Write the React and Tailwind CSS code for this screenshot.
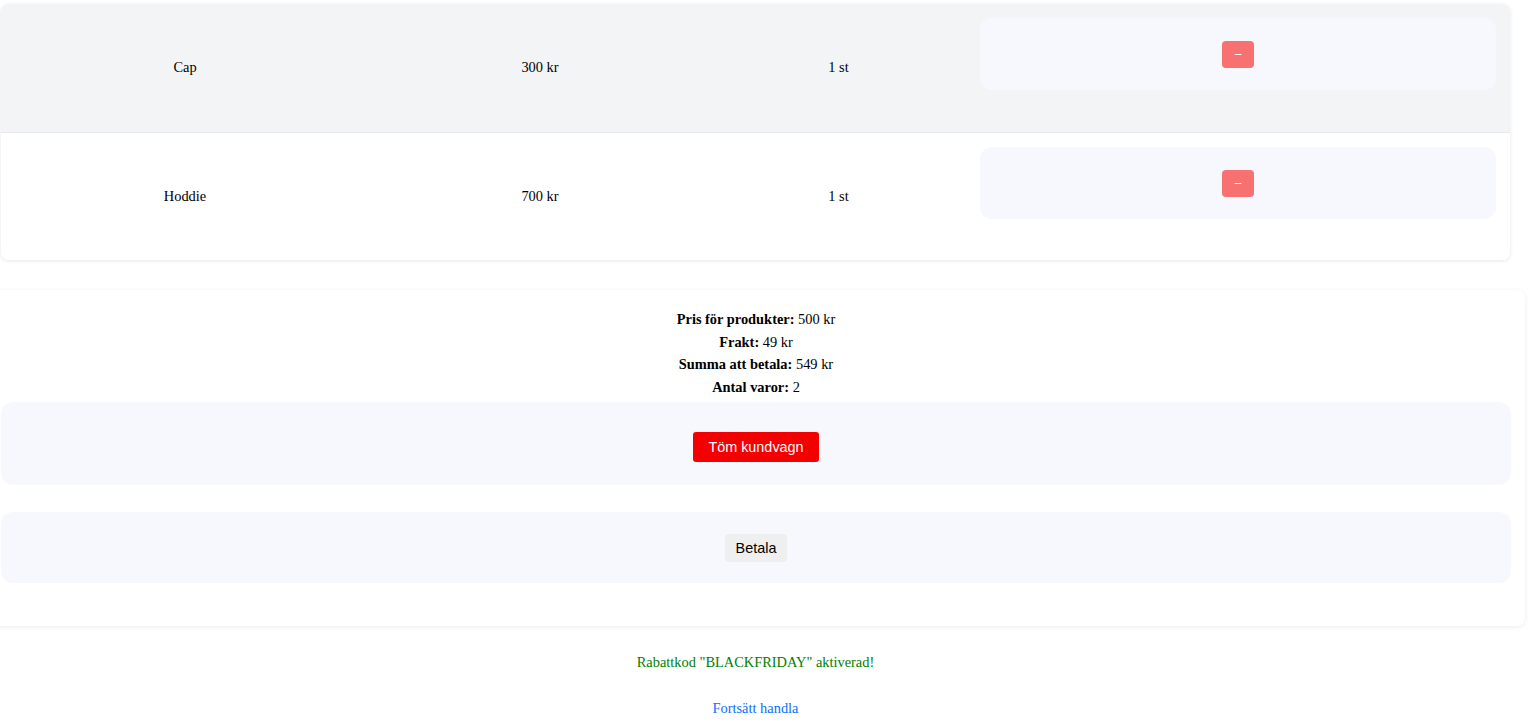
const items = [
    { name: 'Cap', price: 300, qty: 1 },
    { name: 'Hoddie', price: 700, qty: 1 },
];

export default function App() {
    const sum = 500;
    const shipping = 49;

    return (
        <div className="min-h-screen bg-white text-black font-['Liberation_Serif',serif] text-[14.4px] overflow-hidden">
            <div className="ml-[1px] w-[1509px] pt-[4px]">
                {/* Product list */}
                <div className="rounded-lg bg-white shadow-[0_1px_4px_rgba(0,0,0,0.1)] overflow-hidden">
                    {items.map((item, i) => (
                        <div
                            key={item.name}
                            className={
                                i === 0
                                    ? 'flex h-[129px] bg-[#f3f4f6] border-b border-[#e8e9ec]'
                                    : 'flex h-[127px] bg-white'
                            }
                        >
                            <div className="w-[368px] flex items-center justify-center">{item.name}</div>
                            <div className="w-[342px] flex items-center justify-center">{item.price} kr</div>
                            <div className="w-[255px] flex items-center justify-center">{item.qty} st</div>
                            <div className="flex-1 px-[14px] pt-[14px]">
                                <div className="h-[72px] rounded-xl bg-[#f7f8fd] flex items-center justify-center">
                                    <button className="w-[32px] h-[27px] rounded-[4px] bg-[#f87171] text-white text-[12px] font-['Liberation_Sans',sans-serif] flex items-center justify-center">
                                        –
                                    </button>
                                </div>
                            </div>
                        </div>
                    ))}
                </div>

                {/* Summary */}
                <div className="mt-[30px] -ml-[14px] w-[1538px] rounded-lg bg-white shadow-[0_1px_5px_rgba(0,0,0,0.08)] pt-[18px] px-[14px] pb-[43px]">
                    <div className="text-center leading-[22.6px]">
                        <p><b>Pris för produkter:</b> {sum} kr</p>
                        <p><b>Frakt:</b> {shipping} kr</p>
                        <p><b>Summa att betala:</b> {sum + shipping} kr</p>
                        <p><b>Antal varor:</b> {items.length}</p>
                    </div>
                    <div className="mt-[4px] rounded-xl bg-[#f7f8fd] pt-[30px] pb-[23px] flex justify-center">
                        <button className="h-[30px] px-[15px] rounded-[3px] bg-[#f50000] text-white text-[14.4px] font-['Liberation_Sans',sans-serif]">
                            Töm kundvagn
                        </button>
                    </div>
                    <div className="mt-[27px] rounded-xl bg-[#f7f8fd] pt-[22px] pb-[21px] flex justify-center">
                        <button className="h-[28px] px-[11px] rounded-[4px] bg-[#efefef] text-black text-[14.4px] font-['Liberation_Sans',sans-serif]">
                            Betala
                        </button>
                    </div>
                </div>

                <p className="mt-[28px] text-center leading-[17px] text-[#008000]">Rabattkod "BLACKFRIDAY" aktiverad!</p>
                <p className="mt-[29px] text-center leading-[17px]">
                    <a href="#" className="text-[#0d6efd]">Fortsätt handla</a>
                </p>
            </div>
        </div>
    );
}
